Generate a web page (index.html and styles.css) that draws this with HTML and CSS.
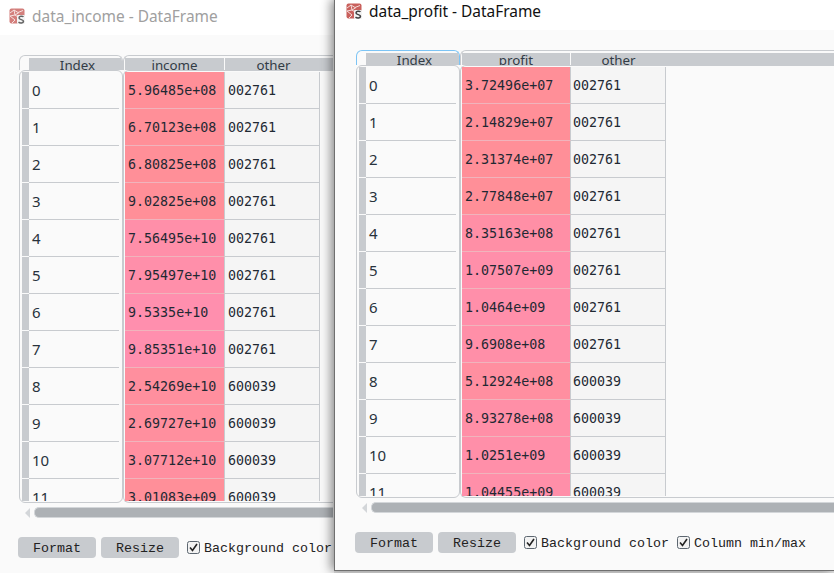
FILE: index.html
```html
<!DOCTYPE html>
<html lang="en">
<head>
<meta charset="utf-8">
<title>DataFrame windows</title>
<link rel="stylesheet" href="styles.css">
</head>
<body>
<section class="window window--back">
  <header class="titlebar titlebar--back">
    <svg class="logo" viewBox="0 0 16 16" aria-hidden="true"><rect x="0.5" y="0.5" width="15" height="15" rx="2" class="logo-bg"/><path d="M1 5 5 2l4 2.5 5-2M5 2l1 5-5 1 5 4-3 3M6 7l4-2.500M6 7l3 2" class="logo-web"/><rect x="8" y="7" width="8" height="9" rx="1" class="logo-cut"/><path d="M14.500 8.800C13.500 7.800 10 7.800 10 10c0 2 4.500 1.300 4.500 3.300 0 2-3.500 2-5 .9" class="logo-s"/></svg>
    <span>data_income - DataFrame</span>
  </header>
  <div class="content">
    <div class="table">
      <div class="corner"><div class="band band--index">Index</div></div>
      <div class="corner corner--data">
        <div class="band band--first">income</div>
        <div class="band band--other"><span class="band-text">other</span></div>
      </div>
      <div class="pane"><div class="clip">
        <div class="rowhead"><i class="stub"></i><span class="label">0</span></div>
        <div class="rowhead"><i class="stub"></i><span class="label">1</span></div>
        <div class="rowhead"><i class="stub"></i><span class="label">2</span></div>
        <div class="rowhead"><i class="stub"></i><span class="label">3</span></div>
        <div class="rowhead"><i class="stub"></i><span class="label">4</span></div>
        <div class="rowhead"><i class="stub"></i><span class="label">5</span></div>
        <div class="rowhead"><i class="stub"></i><span class="label">6</span></div>
        <div class="rowhead"><i class="stub"></i><span class="label">7</span></div>
        <div class="rowhead"><i class="stub"></i><span class="label">8</span></div>
        <div class="rowhead"><i class="stub"></i><span class="label">9</span></div>
        <div class="rowhead"><i class="stub"></i><span class="label">10</span></div>
        <div class="rowhead"><i class="stub"></i><span class="label">11</span></div>
      </div></div>
      <div class="pane pane--data"><div class="clip">
        <div class="row"><span class="cell cell--value" style="background:#ff8f98">5.96485e+08</span><span class="cell cell--other">002761</span></div>
        <div class="row"><span class="cell cell--value" style="background:#ff8f98">6.70123e+08</span><span class="cell cell--other">002761</span></div>
        <div class="row"><span class="cell cell--value" style="background:#ff8f98">6.80825e+08</span><span class="cell cell--other">002761</span></div>
        <div class="row"><span class="cell cell--value" style="background:#ff8f98">9.02825e+08</span><span class="cell cell--other">002761</span></div>
        <div class="row"><span class="cell cell--value" style="background:#ff8fa9">7.56495e+10</span><span class="cell cell--other">002761</span></div>
        <div class="row"><span class="cell cell--value" style="background:#ff8faa">7.95497e+10</span><span class="cell cell--other">002761</span></div>
        <div class="row"><span class="cell cell--value" style="background:#ff8fae">9.5335e+10</span><span class="cell cell--other">002761</span></div>
        <div class="row"><span class="cell cell--value" style="background:#ff8fae">9.85351e+10</span><span class="cell cell--other">002761</span></div>
        <div class="row"><span class="cell cell--value" style="background:#ff8f9e">2.54269e+10</span><span class="cell cell--other">600039</span></div>
        <div class="row"><span class="cell cell--value" style="background:#ff8f9e">2.69727e+10</span><span class="cell cell--other">600039</span></div>
        <div class="row"><span class="cell cell--value" style="background:#ff8fa0">3.07712e+10</span><span class="cell cell--other">600039</span></div>
        <div class="row"><span class="cell cell--value" style="background:#ff8f99">3.01083e+09</span><span class="cell cell--other">600039</span></div>
      </div></div>
    </div>
    <div class="scrollbar"><i class="arrow"></i><i class="thumb"></i></div>
    <div class="actions">
      <button class="btn" type="button">Format</button>
      <button class="btn" type="button">Resize</button>
      <span class="check"><svg class="box" viewBox="0 0 13 13" aria-hidden="true"><rect x="0.500" y="0.500" width="12" height="12" rx="2" class="box-bg"/><path d="M3 6.500 5.500 9.500 10 3" class="box-tick"/></svg>Background color</span>
    </div>
  </div>
</section>

<section class="window window--front">
  <header class="titlebar">
    <svg class="logo" viewBox="0 0 16 16" aria-hidden="true"><rect x="0.5" y="0.5" width="15" height="15" rx="2" class="logo-bg"/><path d="M1 5 5 2l4 2.5 5-2M5 2l1 5-5 1 5 4-3 3M6 7l4-2.500M6 7l3 2" class="logo-web"/><rect x="8" y="7" width="8" height="9" rx="1" class="logo-cut"/><path d="M14.500 8.800C13.500 7.800 10 7.800 10 10c0 2 4.500 1.300 4.500 3.300 0 2-3.500 2-5 .9" class="logo-s"/></svg>
    <span>data_profit - DataFrame</span>
  </header>
  <div class="content">
    <div class="table">
      <div class="corner corner--focus"><div class="band band--index">Index</div></div>
      <div class="corner corner--data">
        <div class="band band--first">profit</div>
        <div class="band band--other"><span class="band-text">other</span></div>
      </div>
      <div class="pane"><div class="clip">
        <div class="rowhead"><i class="stub"></i><span class="label">0</span></div>
        <div class="rowhead"><i class="stub"></i><span class="label">1</span></div>
        <div class="rowhead"><i class="stub"></i><span class="label">2</span></div>
        <div class="rowhead"><i class="stub"></i><span class="label">3</span></div>
        <div class="rowhead"><i class="stub"></i><span class="label">4</span></div>
        <div class="rowhead"><i class="stub"></i><span class="label">5</span></div>
        <div class="rowhead"><i class="stub"></i><span class="label">6</span></div>
        <div class="rowhead"><i class="stub"></i><span class="label">7</span></div>
        <div class="rowhead"><i class="stub"></i><span class="label">8</span></div>
        <div class="rowhead"><i class="stub"></i><span class="label">9</span></div>
        <div class="rowhead"><i class="stub"></i><span class="label">10</span></div>
        <div class="rowhead"><i class="stub"></i><span class="label">11</span></div>
      </div></div>
      <div class="pane pane--data"><div class="clip">
        <div class="row"><span class="cell cell--value" style="background:#ff8f98">3.72496e+07</span><span class="cell cell--other">002761</span></div>
        <div class="row"><span class="cell cell--value" style="background:#ff8f98">2.14829e+07</span><span class="cell cell--other">002761</span></div>
        <div class="row"><span class="cell cell--value" style="background:#ff8f98">2.31374e+07</span><span class="cell cell--other">002761</span></div>
        <div class="row"><span class="cell cell--value" style="background:#ff8f98">2.77848e+07</span><span class="cell cell--other">002761</span></div>
        <div class="row"><span class="cell cell--value" style="background:#ff8fa6">8.35163e+08</span><span class="cell cell--other">002761</span></div>
        <div class="row"><span class="cell cell--value" style="background:#ff8faa">1.07507e+09</span><span class="cell cell--other">002761</span></div>
        <div class="row"><span class="cell cell--value" style="background:#ff8faa">1.0464e+09</span><span class="cell cell--other">002761</span></div>
        <div class="row"><span class="cell cell--value" style="background:#ff8fa8">9.6908e+08</span><span class="cell cell--other">002761</span></div>
        <div class="row"><span class="cell cell--value" style="background:#ff8fa0">5.12924e+08</span><span class="cell cell--other">600039</span></div>
        <div class="row"><span class="cell cell--value" style="background:#ff8fa7">8.93278e+08</span><span class="cell cell--other">600039</span></div>
        <div class="row"><span class="cell cell--value" style="background:#ff8fa9">1.0251e+09</span><span class="cell cell--other">600039</span></div>
        <div class="row"><span class="cell cell--value" style="background:#ff8fa9">1.04455e+09</span><span class="cell cell--other">600039</span></div>
      </div></div>
    </div>
    <div class="scrollbar"><i class="arrow"></i><i class="thumb"></i></div>
    <div class="actions">
      <button class="btn" type="button">Format</button>
      <button class="btn" type="button">Resize</button>
      <span class="check"><svg class="box" viewBox="0 0 13 13" aria-hidden="true"><rect x="0.500" y="0.500" width="12" height="12" rx="2" class="box-bg"/><path d="M3 6.500 5.500 9.500 10 3" class="box-tick"/></svg>Background color</span>
      <span class="check"><svg class="box" viewBox="0 0 13 13" aria-hidden="true"><rect x="0.500" y="0.500" width="12" height="12" rx="2" class="box-bg"/><path d="M3 6.500 5.500 9.500 10 3" class="box-tick"/></svg>Column min/max</span>
    </div>
  </div>
</section>
</body>
</html>
```

FILE: styles.css
```css
* { box-sizing: border-box; }

html, body {
  margin: 0;
  height: 100%;
}

body {
  position: relative;
  width: 834px;
  height: 573px;
  overflow: hidden;
  background: #e4e4e4;
  font-family: "Noto Sans", "Liberation Sans", sans-serif;
}

.window {
  position: absolute;
  top: -1px;
  background: #fafafa;
  border: 1px solid #6f6f6f;
  overflow: hidden;
}

.window--back {
  left: -3px;
  width: 337px;
  height: 575px;
  border-color: transparent;
  --first-col: 100px;
  --other-pad: 3px;
  --other-shift: 1px;
}

.window--front {
  left: 334px;
  width: 500px;
  height: 572px;
  border-right: 0;
  box-shadow: -3px 0 10px rgba(0, 0, 0, 0.45);
  --first-col: 109px;
  --other-pad: 2px;
  --other-shift: 0px;
}

.titlebar {
  display: flex;
  align-items: center;
  gap: 7px;
  height: 30px;
  padding: 0 0 8px 11px;
  background: #fff;
  color: #111;
  font-size: 15.45px;
  line-height: 22px;
}

.titlebar--back {
  height: 35px;
  padding-bottom: 3px;
  color: #a0a0a0;
}

.logo { width: 16px; height: 16px; flex: none; }
.logo-bg { fill: #c9605c; }
.logo-web { fill: none; stroke: #f4dcda; stroke-width: 1; }
.logo-cut { fill: #f3f3f3; }
.logo-s { fill: none; stroke: #3e3e3e; stroke-width: 1.5; }
.titlebar--back .logo { opacity: 0.8; }

.content {
  padding: 20px 0 0 21px;
}

.table {
  display: grid;
  grid-template-columns: 104px 1fr;
  grid-template-rows: 15px 433px;
}

.corner {
  display: flex;
  gap: 1px;
  padding: 2px 0 0 9px;
  border: 1px solid #c8cbcf;
  border-bottom: 0;
  border-radius: 6px 6px 0 0;
  overflow: hidden;
}

.corner--focus { border-color: #7cc4f5; }

.corner--data {
  padding-left: 1px;
  border-right: 0;
  border-top-right-radius: 0;
}

.band {
  height: 12px;
  background: #c8cbcf;
  color: #333c46;
  font-size: 13.33px;
  line-height: 14px;
  text-align: center;
  overflow: hidden;
}

.band--index { flex: 1; padding-left: 4px; }
.band--first { flex: none; width: calc(var(--first-col) - 1px); }
.band--other { flex: 1; padding-left: var(--other-shift); text-align: left; }

.band-text {
  display: inline-block;
  width: 95px;
  text-align: center;
}

.pane {
  padding: 1px 0 1px 2px;
  border: 1px solid #c8cbcf;
  border-radius: 6px;
}

.pane--data {
  padding-left: 1px;
  border-right: 0;
  border-top-right-radius: 0;
  border-bottom-right-radius: 0;
}

.clip {
  height: 429px;
  overflow: hidden;
}

.rowhead {
  display: flex;
  height: 37px;
}

.stub {
  flex: none;
  width: 7px;
  margin-bottom: 1px;
  background: #c8cbcf;
}

.label {
  width: 90px;
  padding-left: 3px;
  border-bottom: 1px solid #c8cbcf;
  color: #28323c;
  font-size: 15px;
  line-height: 37px;
}

.row {
  display: flex;
  height: 37px;
}

.cell {
  border-right: 1px solid #c8cbcf;
  border-bottom: 1px solid #c8cbcf;
  color: #1f2933;
  font-family: "DejaVu Sans Mono", "Liberation Mono", monospace;
  font-size: 13.33px;
  line-height: 37px;
  white-space: nowrap;
}

.cell--value {
  flex: none;
  width: var(--first-col);
  padding-left: 3px;
  border-bottom-color: #f0b4bc;
}

.cell--other {
  flex: none;
  width: 95px;
  padding-left: var(--other-pad);
  background: #f5f5f5;
}

.scrollbar {
  display: flex;
  align-items: center;
  gap: 4px;
  height: 11px;
  margin-top: 4px;
  padding-left: 6px;
}

.arrow {
  flex: none;
  width: 0;
  height: 0;
  border-top: 5px solid transparent;
  border-bottom: 5px solid transparent;
  border-right: 5px solid #d3d6d9;
}

.thumb {
  flex: 1;
  height: 11px;
  background: #adb1b5;
  border: 1px solid #d3d6d9;
  border-right: 0;
  border-radius: 5px 0 0 5px;
}

.actions {
  display: flex;
  align-items: center;
  margin: 19px 0 0 -1px;
  color: #222;
  font-family: "Liberation Mono", monospace;
  font-size: 13.33px;
  white-space: nowrap;
}

.btn {
  flex: none;
  width: 78px;
  height: 21px;
  margin-right: 5px;
  padding: 2px 0 0;
  border: 0;
  border-radius: 4px;
  background: #c8cbcf;
  color: #222;
  font: inherit;
}

.check {
  display: flex;
  flex: none;
  align-items: center;
  gap: 4px;
  margin-left: 3px;
  margin-right: 5px;
  padding-top: 2px;
}

.box { width: 13px; height: 13px; flex: none; margin-top: -3px; }
.box-bg { fill: #f2f2f2; stroke: #5c6670; stroke-width: 1; }
.box-tick { fill: none; stroke: #222; stroke-width: 1.6; }
```
